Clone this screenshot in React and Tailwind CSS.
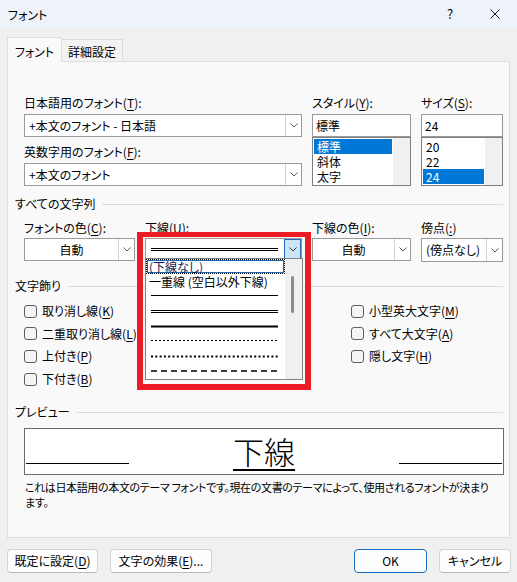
import React from 'react';

// mnemonic letter
const U = ({ c }) => <span className="underline underline-offset-[2px]">{c}</span>;

const Chevron = ({ color = '#5c5c5c' }) => (
  <svg width="8" height="5" viewBox="0 0 8 5">
    <path d="M0.5 0.5 L4 4 L7.5 0.5" fill="none" stroke={color} strokeWidth="1" />
  </svg>
);

function Label({ children, className = '' }) {
  return <div className={`h-[16px] whitespace-nowrap ${className}`}>{children}</div>;
}

function Combo({ children, center, focused, className = '' }) {
  return (
    <div className={`flex h-[23px] border border-[#9a9a9a] bg-white ${className}`}>
      <div
        className={`flex-1 flex items-center overflow-hidden whitespace-nowrap ${
          center ? 'justify-center' : 'pl-[4px]'
        }`}
      >
        {children}
      </div>
      {focused ? (
        <div className="w-[17px] h-[20px] border border-[#1c6bb4] bg-[#cce4f7] flex items-center justify-center">
          <Chevron color="#3b3b3b" />
        </div>
      ) : (
        <div className="w-[16px] border-l border-[#d2d2d2] flex items-center justify-center">
          <Chevron />
        </div>
      )}
    </div>
  );
}

function ListBox({ items, selected }) {
  return (
    <div className="flex h-[49px] border border-[#7f7f7f] bg-white">
      <div className="flex-1 p-px">
        {items.map((it) => (
          <div
            key={it}
            className={`h-[15px] leading-[15px] pl-[3px] whitespace-nowrap ${
              it === selected ? 'bg-[#0078d7] text-white' : ''
            }`}
          >
            {it}
          </div>
        ))}
      </div>
      <div className="w-[17px] bg-[#f0f0f0]" />
    </div>
  );
}

function Check({ children }) {
  return (
    <div className="flex items-center h-[16px] whitespace-nowrap">
      <span className="w-[13px] h-[13px] rounded-[3px] border border-[#5e5e5e] bg-[#f5f5f5]" />
      <span className="ml-[5px]">{children}</span>
    </div>
  );
}

function SectionTitle({ children, className = '' }) {
  return (
    <div className={`flex items-center h-[16px] ${className}`}>
      <span className="whitespace-nowrap">{children}</span>
      <div className="flex-1 h-px bg-[#dcdcdc] ml-[7px] mr-px" />
    </div>
  );
}

function Button({ children, primary, className = '' }) {
  return (
    <button
      type="button"
      className={`h-[24px] rounded-[4px] border bg-[#fdfdfd] flex items-center justify-center whitespace-nowrap ${
        primary ? 'border-[#1a6ec2]' : 'border-[#d3d3d3] border-b-[#bcbcbc]'
      } ${className}`}
    >
      {children}
    </button>
  );
}

// line samples in the underline dropdown
function LineSample({ kind }) {
  const w = 127;
  let body = null;
  if (kind === 'single') body = <line x1="0" y1="0.5" x2={w} y2="0.5" stroke="#000" strokeWidth="1" />;
  if (kind === 'double')
    body = (
      <>
        <line x1="0" y1="0.5" x2={w} y2="0.5" stroke="#000" strokeWidth="1" />
        <line x1="0" y1="2.5" x2={w} y2="2.5" stroke="#000" strokeWidth="1" />
      </>
    );
  if (kind === 'thick') body = <line x1="0" y1="1.5" x2={w} y2="1.5" stroke="#000" strokeWidth="2" />;
  if (kind === 'dot') body = <line x1="0" y1="0.5" x2={w} y2="0.5" stroke="#000" strokeWidth="1" strokeDasharray="2 2" />;
  if (kind === 'dotheavy') body = <line x1="0" y1="1.5" x2={w} y2="1.5" stroke="#000" strokeWidth="2" strokeDasharray="2 2.3" />;
  if (kind === 'dash') body = <line x1="0" y1="1" x2={w} y2="1" stroke="#000" strokeWidth="1.3" strokeDasharray="6 4" />;
  return (
    <svg width={w} height="3" viewBox={`0 0 ${w} 3`}>
      {body}
    </svg>
  );
}

export default function App() {
  return (
    <div className="relative w-[517px] h-[582px] overflow-hidden bg-[#f0f0f0] text-black text-[12px] leading-[16px] font-['Noto_Sans_CJK_JP',sans-serif] [font-feature-settings:'palt']">
      {/* title bar */}
      <div className="h-[28px] bg-[#eef2f9] flex items-center pl-[8px]">
        <span className="pt-[2px]">フォント</span>
        <div className="ml-auto flex items-center h-full">
          <span className="w-[46px] text-center text-[13px]">?</span>
          <span className="w-[44px] flex justify-center">
            <svg width="10" height="10" viewBox="0 0 10 10">
              <path d="M0.5 0.5 L9.5 9.5 M9.5 0.5 L0.5 9.5" stroke="#1a1a1a" strokeWidth="1" />
            </svg>
          </span>
        </div>
      </div>

      <div className="px-[7px] pt-[9px]">
        {/* tabs */}
        <div className="relative z-10 flex items-end h-[25px] -mb-px">
          <div className="w-[55px] h-[25px] border border-b-0 border-[#dcdcdc] bg-[#f9f9f9] flex items-center justify-center pt-[3px]">
            フォント
          </div>
          <div className="w-[61px] h-[22px] mb-px border border-l-0 border-b-0 border-[#dcdcdc] bg-[#f3f3f3] flex items-center justify-center pt-[2px]">
            詳細設定
          </div>
        </div>

        {/* tab page */}
        <div className="h-[477px] border border-[#dedede] bg-[#f9f9f9] pl-[7px] pr-[5px] pt-[33px]">
          <div className="ml-[9px] grid grid-cols-[278px_99px_82px] gap-x-[10px]">
            <div>
              <Label>日本語用のフォント(<U c="T" />):</Label>
              <Combo className="mt-[3px]">+本文のフォント - 日本語</Combo>
              <Label className="mt-[7px]">英数字用のフォント(<U c="F" />):</Label>
              <Combo className="mt-[3px]">+本文のフォント</Combo>
            </div>
            <div>
              <Label>スタイル(<U c="Y" />):</Label>
              <div className="mt-[3px] h-[23px] border border-[#9a9a9a] bg-white pl-[3px] flex items-center">標準</div>
              <ListBox items={['標準', '斜体', '太字']} selected="標準" />
            </div>
            <div>
              <Label>サイズ(<U c="S" />):</Label>
              <div className="mt-[3px] h-[23px] border border-[#9a9a9a] bg-white pl-[3px] flex items-center">24</div>
              <ListBox items={['20', '22', '24']} selected="24" />
            </div>
          </div>

          <SectionTitle className="mt-[10px]">すべての文字列</SectionTitle>

          <div className="mt-[8px] ml-[9px] grid grid-cols-[111px_157px_99px_82px] gap-x-[10px]">
            <div>
              <Label>フォントの色(<U c="C" />):</Label>
              <Combo center className="mt-[2px]">自動</Combo>
            </div>
            <div>
              <Label>下線(<U c="U" />):</Label>
              <Combo focused className="mt-[2px]">
                <span className="pl-px pb-[1px]">
                  <LineSample kind="double" />
                </span>
              </Combo>
            </div>
            <div>
              <Label>下線の色(<U c="I" />):</Label>
              <Combo center className="mt-[2px]">自動</Combo>
            </div>
            <div>
              <Label>傍点(<U c=":" />)</Label>
              <Combo className="mt-[2px] h-[24px]">(傍点なし)</Combo>
            </div>
          </div>

          <SectionTitle className="mt-[16px]">文字飾り</SectionTitle>

          <div className="mt-[9px] flex">
            <div className="ml-[9px] w-[327px] flex flex-col gap-y-[6.7px]">
              <Check>取り消し線(<U c="K" />)</Check>
              <Check>二重取り消し線(<U c="L" />)</Check>
              <Check>上付き(<U c="P" />)</Check>
              <Check>下付き(<U c="B" />)</Check>
            </div>
            <div className="flex flex-col gap-y-[6.7px]">
              <Check>小型英大文字(<U c="M" />)</Check>
              <Check>すべて大文字(<U c="A" />)</Check>
              <Check>隠し文字(<U c="H" />)</Check>
            </div>
          </div>

          <SectionTitle className="mt-[17px]">プレビュー</SectionTitle>

          <div className="mt-[8px] ml-[9px] w-[480px] h-[47px] border border-[#6b6b6b] bg-white flex items-end px-px">
            <div className="w-[103px] h-px bg-black mb-[10px]" />
            <div className="flex-1 flex justify-center">
              <span className="text-[31px] leading-[31px] font-light border-b-2 border-black pb-[3px] mb-[3px] [font-feature-settings:normal]">
                下線
              </span>
            </div>
            <div className="w-[103px] h-px bg-black mb-[10px]" />
          </div>

          <div className="mt-[5px] ml-[10px] text-[11px] tracking-[-0.36px] leading-[15px] whitespace-nowrap">
            これは日本語用の本文のテーマ フォントです。現在の文書のテーマによって、使用されるフォントが決まり
            <br />
            ます。
          </div>
        </div>

        {/* buttons */}
        <div className="mt-[11px] flex justify-between">
          <div className="flex gap-x-[12px]">
            <Button className="w-[91px]">既定に設定(<U c="D" />)</Button>
            <Button className="w-[102px]">文字の効果(<U c="E" />)...</Button>
          </div>
          <div className="flex gap-x-[12px] -mr-px">
            <Button primary className="w-[73px]">OK</Button>
            <Button className="w-[72px]">キャンセル</Button>
          </div>
        </div>
      </div>

      {/* open underline dropdown */}
      <div className="absolute left-[145px] top-[258px] w-[158px] h-[122px] border border-[#828282] bg-white flex z-20">
        <div className="w-[139px] flex flex-col">
          <div className="h-[15px] leading-[13px] pl-[2px] border border-dotted border-black shadow-[inset_0_0_0_1px_#1c6bb4] text-[#0b1d5a]">
            (下線なし)
          </div>
          <div className="h-[15px] leading-[15px] pl-[3px] whitespace-nowrap">一重線 (空白以外下線)</div>
          {['single', 'double', 'thick', 'dot', 'dotheavy', 'dash'].map((k) => (
            <div key={k} className="h-[15px] flex items-center pl-[5px]">
              <LineSample kind={k} />
            </div>
          ))}
        </div>
        <div className="flex-1 bg-[#f0f0f0] pt-[17px] pl-[6px]">
          <div className="w-[3px] h-[37px] rounded-full bg-[#8a8a8a]" />
        </div>
      </div>

      {/* red annotation frame */}
      <div className="absolute left-[137px] top-[232px] w-[174px] h-[158px] border-[6px] border-t-[5px] border-[#ed1c24] z-30 pointer-events-none" />
    </div>
  );
}
